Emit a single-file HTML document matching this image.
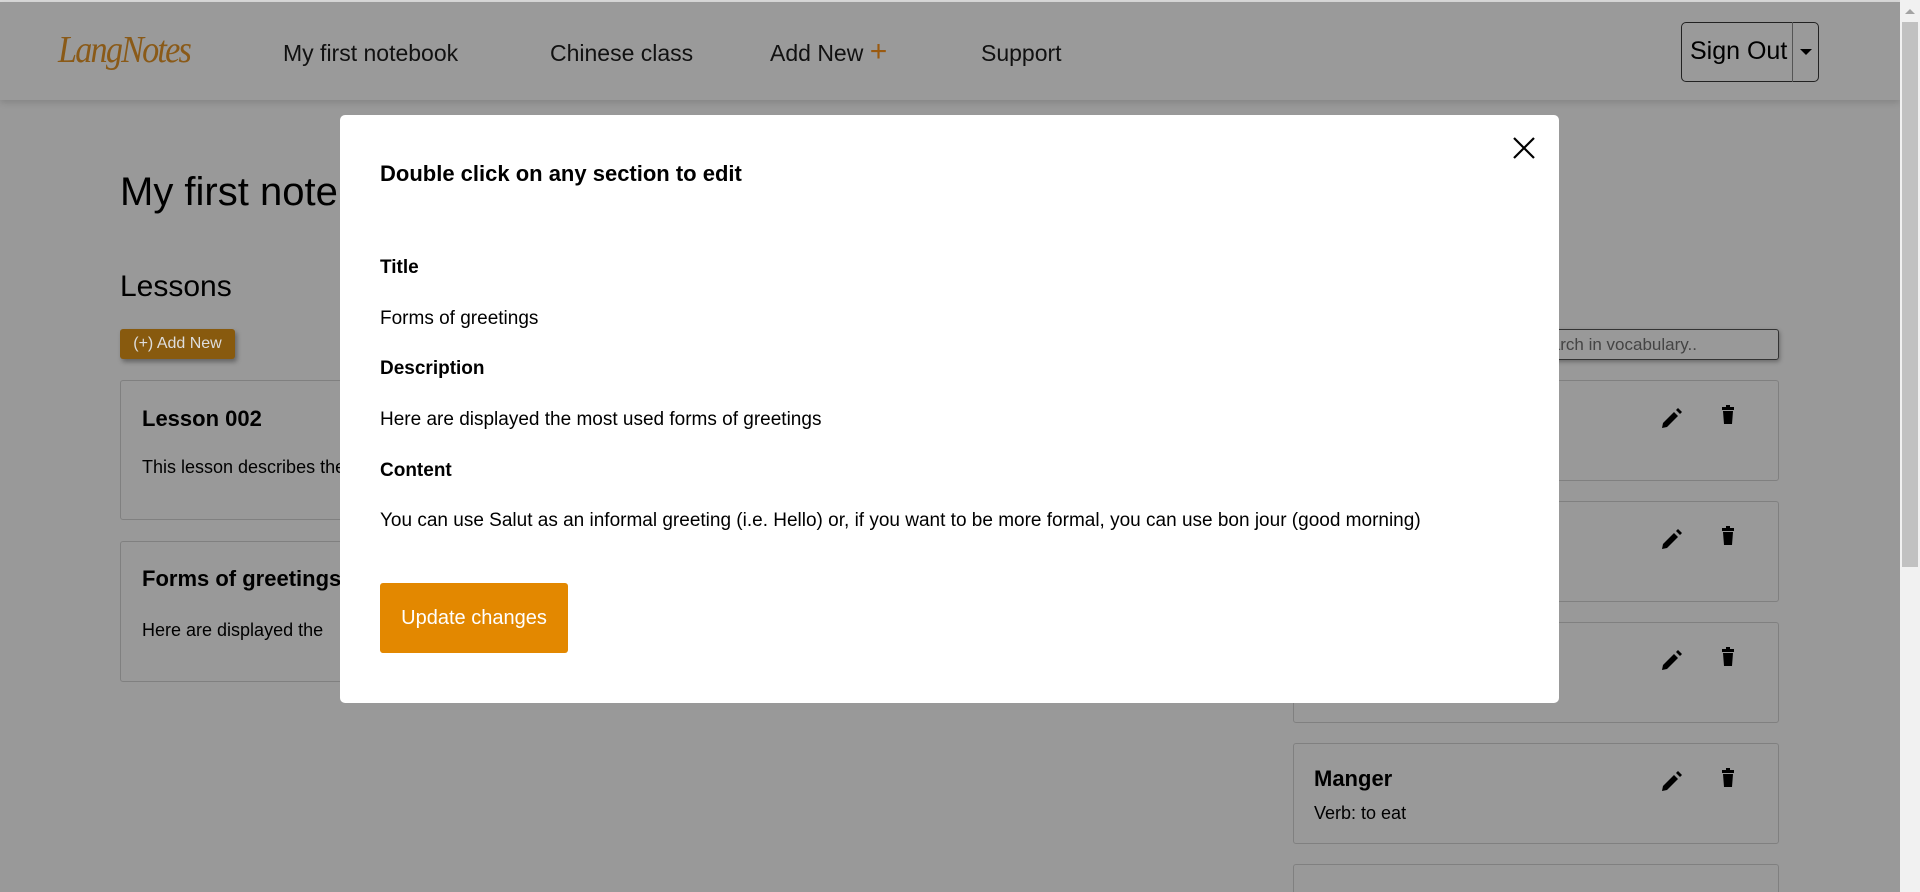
<!DOCTYPE html>
<html style="overflow:hidden;width:1920px;height:892px"><head><meta charset="utf-8"><style>
*{margin:0;padding:0;box-sizing:border-box}
body{width:1920px;height:892px;overflow:hidden;background:#999;font-family:"Liberation Sans",sans-serif;color:#000;position:relative}
.a{position:absolute;white-space:nowrap}
.hdr{position:absolute;left:0;top:2px;width:1900px;height:98px;background:#9a9a9a;box-shadow:0 3px 6px rgba(0,0,0,.12)}
.nav{font-size:23px;top:40px;color:#111}
.card{position:absolute;border:1px solid #808080;border-radius:3px}
.t{font-weight:bold;font-size:22px}
.d{font-size:18px}
.modal{position:absolute;left:340px;top:115px;width:1219px;height:588px;background:#fff;border-radius:5px}
.m{position:absolute;left:40px;font-size:19px;white-space:nowrap}
.b{font-weight:bold}
</style></head><body>
<div class="a" style="left:0;top:0;width:1900px;height:2px;background:#d8d8d8"></div>
<div class="hdr"></div>
<div class="a" style="left:58px;top:28px;font-family:'Liberation Serif',serif;font-style:italic;font-size:38px;color:#8a5a18;letter-spacing:-2px;transform:scaleX(.9);transform-origin:left">LangNotes</div>
<div class="a nav" style="left:283px">My first notebook</div>
<div class="a nav" style="left:550px">Chinese class</div>
<div class="a nav" style="left:770px">Add New <span style="color:#9a5a10;font-size:30px;line-height:20px">+</span></div>
<div class="a nav" style="left:981px">Support</div>
<div class="a" style="left:1681px;top:22px;width:138px;height:60px;border:1px solid #222;border-radius:5px"></div>
<div class="a" style="top:22px;width:1px;height:60px;background:#555;left:1792px"></div>
<div class="a" style="left:1690px;top:37px;font-size:25px">Sign Out</div>
<div class="a" style="left:1800px;top:49px;border-left:6px solid transparent;border-right:6px solid transparent;border-top:6px solid #000"></div>

<div class="a" style="left:120px;top:170px;font-size:40px">My first notebook</div>
<div class="a" style="left:120px;top:270px;font-size:30px">Lessons</div>
<div class="a" style="left:120px;top:329px;width:115px;height:30px;background:#885a0e;border-radius:3px;box-shadow:2px 3px 5px rgba(0,0,0,.35);color:#ddd;font-size:16px;text-align:center;line-height:30px">(+) Add New</div>
<div class="card" style="left:120px;top:380px;width:1150px;height:140px"></div>
<div class="a t" style="left:142px;top:406px">Lesson 002</div>
<div class="a d" style="left:142px;top:457px">This lesson describes the</div>
<div class="card" style="left:120px;top:541px;width:1150px;height:141px"></div>
<div class="a t" style="left:142px;top:566px">Forms of greetings</div>
<div class="a d" style="left:142px;top:620px">Here are displayed the</div>

<div class="a" style="left:1293px;top:329px;width:486px;height:31px;border:1px solid #333;border-radius:3px;box-shadow:1px 2px 4px rgba(0,0,0,.3);font-size:17px;color:#444;padding:5px 0 0 236px">Search in vocabulary..</div>
<div class="card" style="left:1293px;top:380px;width:486px;height:101px"></div>
<div class="card" style="left:1293px;top:501px;width:486px;height:101px"></div>
<div class="card" style="left:1293px;top:622px;width:486px;height:101px"></div>
<div class="card" style="left:1293px;top:743px;width:486px;height:101px"></div>
<div class="card" style="left:1293px;top:864px;width:486px;height:60px"></div>
<div class="a t" style="left:1314px;top:766px">Manger</div>
<div class="a d" style="left:1314px;top:803px">Verb: to eat</div>
<svg class="a" style="left:0;top:0" width="1920" height="892">
<g fill="#000">
<g id="ic"><path d="M1663 423 l11 -11 l4 4 l-11 11 l-5 1z M1676 410 l2 -2 l4 4 l-2 2z"/><path d="M1722 407 h4 v-2 h4 v2 h4 v3 h-12z M1723 411 h10 l-1 13 h-8z"/></g>
<use href="#ic" y="121"/><use href="#ic" y="242"/><use href="#ic" y="363"/>
</g></svg>

<div class="modal">
<svg class="a" style="left:1173px;top:22px" width="22" height="22"><path d="M1 1L21 21M21 1L1 21" stroke="#000" stroke-width="2.2"/></svg>
<div class="m b" style="top:46px;font-size:22px">Double click on any section to edit</div>
<div class="m b" style="top:142px">Title</div>
<div class="m" style="top:193px">Forms of greetings</div>
<div class="m b" style="top:243px">Description</div>
<div class="m" style="top:294px">Here are displayed the most used forms of greetings</div>
<div class="m b" style="top:345px">Content</div>
<div class="m" style="top:395px">You can use Salut as an informal greeting (i.e. Hello) or, if you want to be more formal, you can use bon jour (good morning)</div>
<div class="a" style="left:40px;top:468px;width:188px;height:70px;background:#e38800;border-radius:3px;color:#fff;font-size:20px;text-align:center;line-height:70px">Update changes</div>
</div>

<div class="a" style="left:1900px;top:0;width:20px;height:892px;background:#f1f1f1"></div>
<div class="a" style="left:1902px;top:22px;width:16px;height:545px;background:#c1c1c1"></div>
<div class="a" style="left:1905px;top:9px;border-left:5px solid transparent;border-right:5px solid transparent;border-bottom:5px solid #a3a3a3"></div>
</body></html>
